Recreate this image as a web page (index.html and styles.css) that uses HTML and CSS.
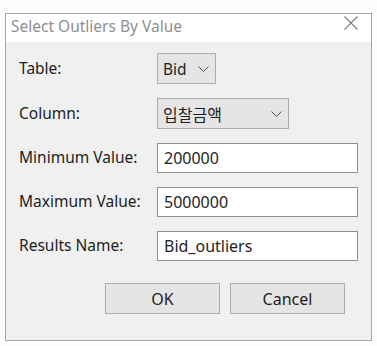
FILE: index.html
```html
<!DOCTYPE html>
<html>
  <head>
  <link rel="stylesheet" href="styles.css">
  </head>
  <body>

    <div class="dialog">
      <div class="titlebar">
        <span class="title">Select Outliers By Value</span>
        <svg class="close" width="14" height="14" viewBox="0 0 14 14">
          <path d="M0.5 0.5 L13.5 13.5 M13.5 0.5 L0.5 13.5" stroke="#7a7a7a" stroke-width="1.1" fill="none" />
        </svg>
      </div>

      <div class="content">
        <div class="form">
          <label class="label">Table:</label>
          <div class="dropdown dropdown-table">
            <span>Bid</span>
            <svg class="chevron" width="11" height="6" viewBox="0 0 11 6">
              <path d="M0.5 0.5 L5.5 5.5 L10.5 0.5" stroke="#555" stroke-width="1" fill="none" />
            </svg>
          </div>

          <label class="label">Column:</label>
          <div class="dropdown dropdown-column">
            <span class="ko">입찰금액</span>
            <svg class="chevron" width="11" height="6" viewBox="0 0 11 6">
              <path d="M0.5 0.5 L5.5 5.5 L10.5 0.5" stroke="#555" stroke-width="1" fill="none" />
            </svg>
          </div>

          <label class="label">Minimum Value:</label>
          <input class="field" type="text" value="200000">

          <label class="label">Maximum Value:</label>
          <input class="field" type="text" value="5000000">

          <label class="label">Results Name:</label>
          <input class="field" type="text" value="Bid_outliers">
        </div>

        <div class="buttons">
          <button class="btn">OK</button>
          <button class="btn">Cancel</button>
        </div>
      </div>
    </div>

  </body>
</html>
```

FILE: styles.css
```css
html, body {
  height: 100%;
}
body {
  --border: #a6a6a6;
  --face: #f0f0f0;
  --control: #e5e5e5;
  --text: #1e1e1e;

  margin: 0;
  background-color: #fdfdfd;
  font-family: "Noto Sans", "Noto Sans CJK KR", sans-serif;
  font-size: 15.5px;
  color: var(--text);
}

.dialog {
  margin: 13px 0 0 5px;
  width: 365px;
  height: 326px;
  border: 1px solid var(--border);
  background-color: var(--face);
  display: flex;
  flex-direction: column;
}

/* title text and X sit a little above the middle, like Windows */
.titlebar {
  height: 28px;
  box-sizing: border-box;
  background-color: #ffffff;
  display: flex;
  align-items: flex-start;
  justify-content: space-between;
  padding: 1px 13px 0 5px;
}

.title {
  color: #8f8f8f;
  font-size: 15.5px;
  line-height: 20px;
  margin-top: 1px;
}

.close {
  display: block;
  margin-top: 1px;
}

.content {
  padding: 11px 14px 0 13px;
}

.form {
  display: grid;
  grid-template-columns: 138px 201px;
  row-gap: 14px;
  align-items: center;
}

.label {
  font-size: 15.5px;
  margin-top: -2px;
}

.dropdown {
  height: 31px;
  box-sizing: border-box;
  border: 1px solid #adadad;
  background-color: var(--control);
  display: flex;
  align-items: center;
  justify-content: space-between;
  padding: 0 6px 0 5px;
}
.dropdown-table {
  width: 59px;
}
.dropdown-column {
  width: 132px;
}
.ko {
  font-family: "Noto Sans CJK KR", sans-serif;
  font-size: 16px;
}

.field {
  height: 30px;
  width: 201px;
  box-sizing: border-box;
  margin: 0;
  border: 1px solid #8f8f8f;
  background-color: #ffffff;
  padding: 0 6px;
  font-family: "Noto Sans", sans-serif;
  font-size: 16px;
  color: var(--text);
  outline: none;
}

.buttons {
  display: flex;
  justify-content: flex-end;
  gap: 10px;
  margin-top: 22px;
  padding-right: 12px;
}

.btn {
  width: 115px;
  height: 31px;
  margin: 0;
  border: 1px solid #adadad;
  background-color: var(--control);
  font-family: "Noto Sans", sans-serif;
  font-size: 16px;
  color: var(--text);
}
```
